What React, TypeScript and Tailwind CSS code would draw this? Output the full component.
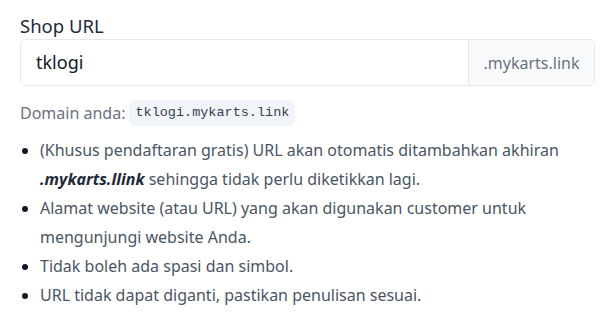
const items = [
  <>
    (Khusus pendaftaran gratis) URL akan otomatis ditambahkan akhiran{" "}
    <em className="font-bold text-gray-800">.mykarts.llink</em> sehingga tidak perlu diketikkan lagi.
  </>,
  <>Alamat website (atau URL) yang akan digunakan customer untuk mengunjungi website Anda.</>,
  <>Tidak boleh ada spasi dan simbol.</>,
  <>URL tidak dapat diganti, pastikan penulisan sesuai.</>,
];

export default function App() {
  return (
    <div className="min-h-screen bg-white px-5 pt-[12px] font-['Noto_Sans',sans-serif]">
      <label className="block text-[18.5px] leading-[27px] text-gray-800">Shop URL</label>
      <div className="flex h-[47px] w-[575px] overflow-hidden rounded-md border border-gray-200">
        <input
          defaultValue="tklogi"
          className="min-w-0 flex-1 bg-white px-[15px] text-[18px] text-gray-900 outline-none"
        />
        <span className="flex w-[126px] items-center justify-center border-l border-gray-200 bg-gray-50 text-[16px] text-gray-500">
          .mykarts.link
        </span>
      </div>
      <p className="mt-[14px] flex items-center text-[16px] text-gray-500">
        Domain anda:
        <code className="ml-[4px] rounded-md bg-slate-100 px-[6px] py-[3px] font-['Liberation_Mono',monospace] text-[13.5px] text-gray-700">
          tklogi.mykarts.link
        </code>
      </p>
      <ul className="mt-[10px] list-disc pl-5 text-[16px] leading-[29px] text-gray-600 marker:text-gray-900">
        {items.map((it, i) => (
          <li key={i}>{it}</li>
        ))}
      </ul>
    </div>
  );
}
